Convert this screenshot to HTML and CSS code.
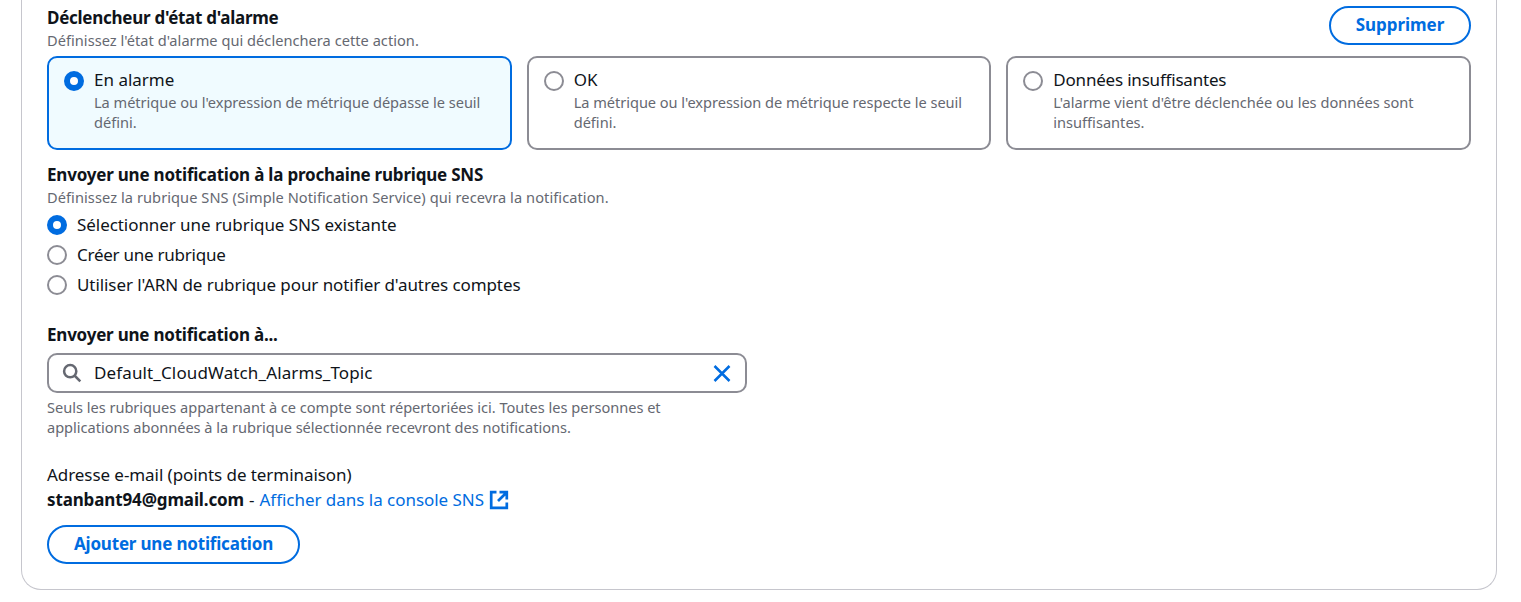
FILE: index.html
```
<!DOCTYPE html>
<html lang="fr">
<head>
<meta charset="utf-8">
<title>Notification</title>
<link rel="stylesheet" href="styles.css">
</head>
<body>
<main class="card">
  <section class="trigger">
    <header class="trigger-head">
      <div>
        <h2 class="label"><span class="t-trigger">Déclencheur d'état d'alarme</span></h2>
        <p class="hint"><span class="t-trigger-hint">Définissez l'état d'alarme qui déclenchera cette action.</span></p>
      </div>
      <button class="button button-remove"><span class="t-remove">Supprimer</span></button>
    </header>
    <div class="tiles">
      <div class="tile tile-selected">
        <span class="radio radio-on"></span>
        <div>
          <div class="option">En alarme</div>
          <p class="hint"><span class="t-alarm-hint">La métrique ou l'expression de métrique dépasse le seuil</span><br>défini.</p>
        </div>
      </div>
      <div class="tile">
        <span class="radio"></span>
        <div>
          <div class="option">OK</div>
          <p class="hint"><span class="t-alarm-hint">La métrique ou l'expression de métrique respecte le seuil</span><br>défini.</p>
        </div>
      </div>
      <div class="tile">
        <span class="radio"></span>
        <div>
          <div class="option"><span class="t-data">Données insuffisantes</span></div>
          <p class="hint">L'alarme vient d'être déclenchée ou les données sont<br>insuffisantes.</p>
        </div>
      </div>
    </div>
  </section>
  <section class="topic">
    <h2 class="label"><span class="t-topic">Envoyer une notification à la prochaine rubrique SNS</span></h2>
    <p class="hint"><span class="t-topic-hint">Définissez la rubrique SNS (Simple Notification Service) qui recevra la notification.</span></p>
    <div class="choices">
      <div class="choice"><span class="radio radio-on"></span><span class="t-select">Sélectionner une rubrique SNS existante</span></div>
      <div class="choice"><span class="radio"></span><span class="t-create">Créer une rubrique</span></div>
      <div class="choice"><span class="radio"></span><span class="t-arn">Utiliser l'ARN de rubrique pour notifier d'autres comptes</span></div>
    </div>
  </section>
  <section class="recipient">
    <h2 class="label"><span class="t-send">Envoyer une notification à...</span></h2>
    <div class="search">
      <svg class="search-icon" viewBox="0 0 20 20"><circle cx="8.2" cy="8.2" r="6.1"/><path d="M12.5 12.5 18.3 18.3"/></svg>
      <span class="search-value">Default_CloudWatch_Alarms_Topic</span>
      <svg class="clear-icon" viewBox="0 0 20 20"><path d="M2.5 3 17.5 18M17.5 3 2.5 18"/></svg>
    </div>
    <p class="hint help">Seuls les rubriques appartenant à ce compte sont répertoriées ici. Toutes les personnes et<br>applications abonnées à la rubrique sélectionnée recevront des notifications.</p>
  </section>
  <section class="endpoint">
    <div class="t-address">Adresse e-mail (points de terminaison)</div>
    <div class="endpoint-line"><strong class="t-mail">stanbant94@gmail.com</strong><span class="dash">-</span><a class="link">Afficher dans la console SNS<svg class="external-icon" viewBox="0 0 20 20"><path d="M7.5 2.2H2.2V17.8H17.8V12.5M10.5 2.2H17.8V9.5M17.8 2.2 9 11"/></svg></a></div>
  </section>
  <button class="button button-add"><span class="t-add">Ajouter une notification</span></button>
</main>
</body>
</html>
```

FILE: styles.css
```
* { box-sizing: border-box; }
body {
  margin: 0;
  height: 602px;
  overflow: hidden;
  padding: 0 24px 0 21px;
  background: #fff;
  color: #0f141a;
  font: 17px/25px "Noto Sans", sans-serif;
}
h2, p { margin: 0; }
.card {
  height: 590px;
  padding: 6px 25px 0;
  border: 1px solid #c6c6cd;
  border-top: 0;
  border-radius: 0 0 20px 20px;
}
.label { font-size: 17px; line-height: 25px; font-weight: 700; }
.hint { font-size: 14.6px; line-height: 20px; color: #656871; white-space: nowrap; }
.trigger-head { display: flex; justify-content: space-between; align-items: flex-start; height: 50px; }
.trigger-head > div { margin-top: -1px; }
.button {
  display: flex;
  align-items: center;
  justify-content: center;
  height: 39px;
  padding: 0 0 2px;
  border: 2px solid #006ce0;
  border-radius: 20px;
  background: #fff;
  color: #006ce0;
  font: 700 17px/25px "Noto Sans", sans-serif;
}
.button-remove { width: 142px; }
.button-add { width: 253px; }
.tiles { display: grid; grid-template-columns: repeat(3, minmax(0, 1fr)); gap: 15px; }
.tile { display: flex; gap: 10px; height: 94px; padding: 9px 15px; border: 2px solid #8c8c94; border-radius: 10px; }
.tile-selected { border-color: #006ce0; background: #f0fbff; }
.radio { flex: none; width: 20px; height: 20px; margin-top: 3px; border: 2.5px solid #8c8c94; border-radius: 50%; background: #fff; }
.tile .radio { margin-top: 4px; }
.radio.radio-on { border: 6px solid #006ce0; }
.topic { margin-top: 12px; }
.choices { display: grid; gap: 5px; margin-top: 5px; }
.choice { display: flex; gap: 10px; white-space: nowrap; }
.recipient { margin-top: 25px; width: 700px; }
.search { display: flex; align-items: center; height: 40px; margin-top: 6px; padding: 0 13px; border: 2px solid #8c8c94; border-radius: 10px; }
.search-value { flex: 1; margin-left: 12px; padding-bottom: 2px; letter-spacing: 0.13px; }
svg { display: block; flex: none; fill: none; stroke-width: 2.5; }
.search-icon { width: 20px; height: 20px; stroke: #656871; }
.clear-icon { width: 20px; height: 20px; stroke: #006ce0; }
.help { margin-top: 4px; letter-spacing: -0.02px; }
.endpoint { margin: 25px 0 13px; }
.endpoint-line { display: flex; }
.dash { margin: 0 5px; }
.link { display: flex; align-items: center; gap: 5px; color: #006ce0; letter-spacing: -0.03px; }
.external-icon { width: 20px; height: 20px; stroke: currentColor; stroke-width: 2.7; }

/* Per-text tracking */
.t-trigger { letter-spacing: -0.27px; }
.t-trigger-hint { letter-spacing: 0.03px; }
.t-remove { letter-spacing: -0.05px; }
.t-alarm-hint { letter-spacing: -0.035px; }
.t-data { letter-spacing: -0.2px; }
.t-topic { letter-spacing: -0.21px; }
.t-topic-hint { letter-spacing: 0.07px; }
.t-select { letter-spacing: -0.06px; }
.t-create { letter-spacing: -0.25px; }
.t-arn { letter-spacing: -0.08px; }
.t-send { letter-spacing: -0.22px; }
.t-address { letter-spacing: -0.065px; }
.t-mail { letter-spacing: -0.13px; }
.t-add { letter-spacing: -0.19px; }
```
